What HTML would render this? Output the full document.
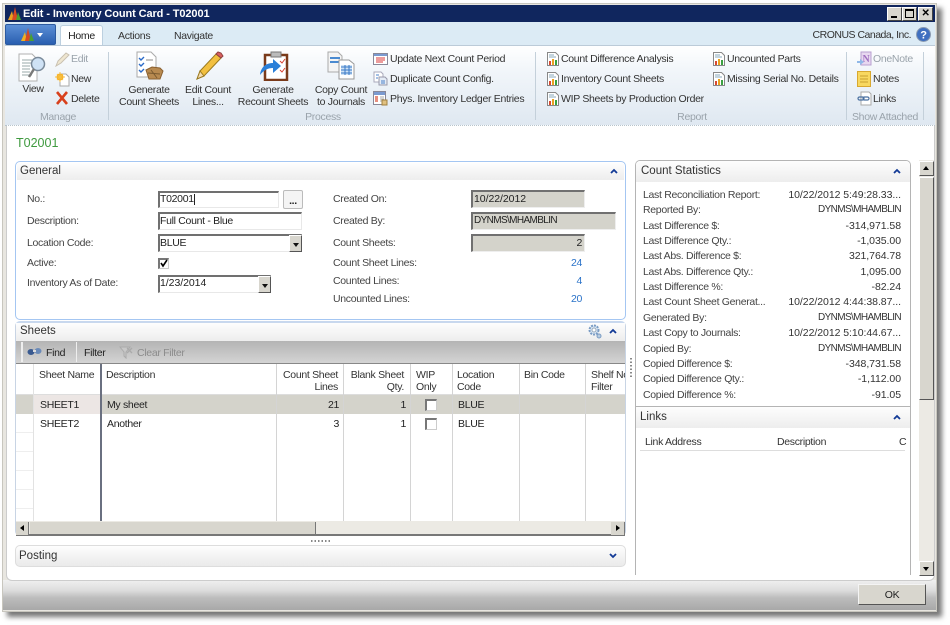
<!DOCTYPE html>
<html><head><meta charset="utf-8"><style>
*{box-sizing:border-box}
html,body{margin:0;padding:0;width:950px;height:625px;overflow:hidden;background:#fff;font-family:"Liberation Sans",sans-serif;font-size:10.5px;letter-spacing:-.31px;color:#333}
#w{position:absolute;left:0;top:0;width:950px;height:625px;filter:blur(.3px);overflow:hidden;background:#fff}
.a{position:absolute}
.t{position:absolute;white-space:nowrap;line-height:14px}
.h{font-size:11.5px;letter-spacing:0}
.n{letter-spacing:-.05px}
.u{font-size:10px;letter-spacing:-.62px}
.r{text-align:right}
.c{text-align:center}
.g{color:#9aa3ab}
.l{color:#444}
.b{color:#2a72c8}
.f{position:absolute;background:#fff;border:1px solid #e8e8e8;border-top:2px solid #707070;border-left:2px solid #707070}
.ro{background:#d4d3cb;border-color:#eee;border-top:2px solid #707070;border-left:2px solid #707070}
.dd{position:absolute;background:#d8d6ce;border:1px solid;border-color:#fff #555 #555 #fff}
.dd:after{content:"";position:absolute;left:3px;top:7px;border:3px solid transparent;border-top:4px solid #111;border-bottom:0}
.p{position:absolute;background:#fff;border-radius:5px}
.hd{position:absolute;background:linear-gradient(#fdfdfd,#ededed)}
.cv{position:absolute}
.ln{position:absolute;background:#d4d4d4}
.cb{position:absolute;width:11px;height:11px;background:#fff;border:1px solid #ccc;border-top:2px solid #777;border-left:2px solid #777}
</style></head><body><div id="w">
<!-- window frame with shadow -->
<div class="a" style="left:2px;top:3px;width:935px;height:609px;background:#e8e6e0;border:1px solid #c8c6be;box-shadow:5px 5px 5px #777"></div>
<!-- title bar -->
<div class="a" style="left:5px;top:5px;width:930px;height:17px;background:#10265e"></div>
<svg class="a" style="left:7px;top:6px" width="16" height="15" viewBox="0 0 16 15"><path d="M1 14L5 5l2 9z" fill="#e8a020"/><path d="M5 14L8 1l3 13z" fill="#d84a20"/><path d="M9 14l2-8 3 8z" fill="#4aa030"/></svg>
<div class="t" style="left:23px;top:7px;color:#fff;font-weight:bold;font-size:11px;letter-spacing:-.1px">Edit - Inventory Count Card - T02001</div>
<div class="a" style="left:887px;top:7px;width:15px;height:14px;background:#d8d6ce;border:1px solid;border-color:#fff #444 #444 #fff"><div class="a" style="left:3px;top:8px;width:6px;height:2px;background:#000"></div></div>
<div class="a" style="left:902px;top:7px;width:15px;height:14px;background:#d8d6ce;border:1px solid;border-color:#fff #444 #444 #fff"><div class="a" style="left:2px;top:1px;width:9px;height:9px;border:1px solid #000;border-top-width:2px"></div></div>
<div class="t" style="left:918px;top:7px;width:15px;height:14px;background:#d8d6ce;border:1px solid;border-color:#fff #444 #444 #fff;font-weight:bold;font-size:10px;line-height:11px;text-align:center;color:#000">✕</div>
<!-- tab row -->
<div class="a" style="left:5px;top:22px;width:930px;height:24px;background:#dcebf5"></div>
<div class="a" style="left:5px;top:24px;width:51px;height:21px;background:linear-gradient(#5b8fd6,#2a5fb0);border:1px solid #2c5aa0;border-radius:2px"></div>
<svg class="a" style="left:20px;top:27px" width="16" height="15" viewBox="0 0 16 15"><path d="M1 14L5 5l2 9z" fill="#f0b020"/><path d="M5 14L8 1l3 13z" fill="#d84a20"/><path d="M9 14l2-8 3 8z" fill="#4aa030"/></svg>
<div class="a" style="left:37px;top:33px;border:3.5px solid transparent;border-top:4px solid #fff;border-bottom:0"></div>
<div class="a" style="left:60px;top:25px;width:43px;height:21px;background:#fff;border:1px solid #bcd0e0;border-bottom:0;border-radius:3px 3px 0 0"></div>
<div class="t c" style="left:60px;top:29px;width:43px;color:#222">Home</div>
<div class="t" style="left:118px;top:29px;color:#333">Actions</div>
<div class="t" style="left:174px;top:29px;color:#333">Navigate</div>
<div class="t r" style="left:760px;top:28px;width:151px;color:#333;letter-spacing:-.5px">CRONUS Canada, Inc.</div>
<svg class="a" style="left:916px;top:27px" width="15" height="15" viewBox="0 0 15 15"><circle cx="7.5" cy="7.5" r="7" fill="#3f6fc0" stroke="#8a9ab0"/><text x="7.5" y="11.5" text-anchor="middle" font-size="11" font-weight="bold" fill="#fff" font-family="Liberation Sans">?</text></svg>
<!-- ribbon -->
<div class="a" style="left:5px;top:45px;width:930px;height:81px;background:linear-gradient(#fff 0%,#f2f6fa 30%,#dfe8f1 100%);border-top:1px solid #bccbd8;border-bottom:1px dotted #b8c4cc"></div>
<div class="ln" style="left:108px;top:52px;width:1px;height:68px;background:#c4d0da"></div>
<div class="ln" style="left:535px;top:52px;width:1px;height:68px;background:#c4d0da"></div>
<div class="ln" style="left:846px;top:52px;width:1px;height:68px;background:#c4d0da"></div>
<div class="ln" style="left:923px;top:52px;width:1px;height:68px;background:#c4d0da"></div>

<!-- View icon -->
<svg class="a" style="left:18px;top:52px" width="30" height="30" viewBox="0 0 30 30"><path d="M1 2h13l5 5v22H1z" fill="#fff" stroke="#b0b0b0"/><path d="M4 8h10M4 11h10M4 14h8M4 17h8M4 20h8M4 23h10" stroke="#9aa" stroke-width="1"/><circle cx="20" cy="12" r="6.5" fill="#cfe2f5" stroke="#7a8a9a" stroke-width="1.5"/><path d="M16 17l-5 8" stroke="#7a7a7a" stroke-width="2.5"/></svg>
<div class="t c" style="left:13px;top:82px;width:40px">View</div>
<!-- Edit/New/Delete -->
<svg class="a" style="left:55px;top:52px" width="15" height="15" viewBox="0 0 15 15"><path d="M1 14l2-5 8-8 3 2-8 8z" fill="#efe6d0" stroke="#c8c0b0"/></svg>
<div class="t g" style="left:71px;top:52px">Edit</div>
<svg class="a" style="left:55px;top:71px" width="15" height="16" viewBox="0 0 15 16"><path d="M5 3h6l3 3v9H5z" fill="#fff" stroke="#aaa"/><circle cx="5" cy="6" r="3.5" fill="#f6a820"/><path d="M5 1v10M0 6h10M2 3l6 6M8 3l-6 6" stroke="#f6c040"/></svg>
<div class="t" style="left:71px;top:72px">New</div>
<svg class="a" style="left:55px;top:91px" width="14" height="14" viewBox="0 0 14 14"><path d="M2 1l10 12M12 1L2 13" stroke="#d8401c" stroke-width="2.6"/></svg>
<div class="t" style="left:71px;top:92px">Delete</div>
<div class="t c g" style="left:38px;top:110px;width:40px">Manage</div>

<!-- Generate Count Sheets -->
<svg class="a" style="left:134px;top:51px" width="32" height="30" viewBox="0 0 32 30"><path d="M3 1h14l5 5v20H3z" fill="#fff" stroke="#aaa"/><path d="M5 7l2 2 3-3M5 13l2 2 3-3M5 19l2 2 3-3" stroke="#2a6ac8" stroke-width="1.4" fill="none"/><path d="M12 9h7" stroke="#888"/><path d="M12 19l6-3 8 1 3 3-3 8H15z" fill="#b88a50" stroke="#8a6030"/><path d="M14 22l12 1M17 19l6 8" stroke="#7a5a30"/></svg>
<div class="t c" style="left:112px;top:83px;width:74px">Generate</div>
<div class="t c" style="left:112px;top:95px;width:74px">Count Sheets</div>
<!-- Edit Count Lines -->
<svg class="a" style="left:195px;top:51px" width="30" height="30" viewBox="0 0 30 30"><path d="M2 28l3-8L21 3l5 4L9 25z" fill="#f2c040" stroke="#9a7a20"/><path d="M2 28l3-8 4 5z" fill="#f5dcb0" stroke="#9a7a20"/><path d="M21 3l5 4 2-2-2-3-3-1z" fill="#d86060" stroke="#904040"/></svg>
<div class="t c" style="left:178px;top:83px;width:60px">Edit Count</div>
<div class="t c" style="left:178px;top:95px;width:60px">Lines...</div>
<!-- Generate Recount Sheets -->
<svg class="a" style="left:259px;top:51px" width="30" height="30" viewBox="0 0 30 30"><rect x="6" y="4" width="22" height="25" fill="#fff" stroke="#7a3a1a" stroke-width="2.5"/><rect x="12" y="1" width="10" height="5" fill="#bbb" stroke="#777"/><path d="M1 24c1-9 7-12 13-12V8l8 7-8 7v-5c-5 0-9 2-13 7z" fill="#2a7fd8"/><path d="M21 19l2 2 3-4M21 10l2 2 3-4" stroke="#d84030" fill="none"/></svg>
<div class="t c" style="left:236px;top:83px;width:74px">Generate</div>
<div class="t c" style="left:236px;top:95px;width:74px">Recount Sheets</div>
<!-- Copy Count to Journals -->
<svg class="a" style="left:326px;top:51px" width="30" height="30" viewBox="0 0 30 30"><path d="M2 1h10l4 4v16H2z" fill="#f4f4f4" stroke="#aaa"/><path d="M4 7h10M4 11h10" stroke="#4a8ad0" stroke-width="2"/><path d="M13 9h10l5 4v15H13z" fill="#fff" stroke="#999"/><path d="M15 14h11v10H15z" fill="#cfe2f5"/><path d="M15 16h11M15 19h11M15 22h11M19 14v10M23 14v10" stroke="#3a7ac8"/></svg>
<div class="t c" style="left:311px;top:83px;width:60px">Copy Count</div>
<div class="t c" style="left:311px;top:95px;width:60px">to Journals</div>
<div class="t c g" style="left:300px;top:110px;width:46px">Process</div>

<!-- small process list -->
<svg class="a" style="left:373px;top:52px" width="15" height="14" viewBox="0 0 15 14"><rect x=".5" y="1.5" width="14" height="11" fill="#fff" stroke="#889"/><rect x="1" y="2" width="13" height="2" fill="#7a9ad0"/><path d="M3 6h9M3 8h9M3 10h7" stroke="#e06060" stroke-width="1.2"/></svg>
<div class="t" style="left:390px;top:52px">Update Next Count Period</div>
<svg class="a" style="left:373px;top:71px" width="15" height="15" viewBox="0 0 15 15"><path d="M1 1h7l2 2v8H1z" fill="#fff" stroke="#aab"/><path d="M6 6h6l2 2v6H6z" fill="#e4ecf6" stroke="#99a"/><path d="M3 4h3M3 7h2M8 10h4M8 12h4" stroke="#4a80c8"/></svg>
<div class="t" style="left:390px;top:72px">Duplicate Count Config.</div>
<svg class="a" style="left:373px;top:91px" width="15" height="15" viewBox="0 0 15 15"><rect x=".5" y=".5" width="12" height="13" fill="#fff" stroke="#889"/><rect x="1" y="1" width="11" height="3" fill="#7a9ad0"/><path d="M2 6h3M2 8h3M2 10h3" stroke="#d84a30" stroke-width="1.3"/><path d="M7 6h4M7 8h4M7 10h4" stroke="#aaa"/><rect x="9" y="9" width="5" height="5" fill="#e0c080" stroke="#a08040"/></svg>
<div class="t" style="left:390px;top:92px">Phys. Inventory Ledger Entries</div>

<!-- Report icons and text -->
<svg width="0" height="0" class="a"><defs><g id="rp"><path d="M.5.5h8l3 3v10H.5z" fill="#fff" stroke="#888"/><path d="M2 3h5M2 5h7" stroke="#8ab"/><rect x="2" y="9" width="2" height="4" fill="#d84a30"/><rect x="5" y="7" width="2" height="6" fill="#e8a020"/><rect x="8" y="8" width="2" height="5" fill="#3aa040"/></g></defs></svg>
<svg class="a" style="left:547px;top:52px" width="12" height="14"><use href="#rp"/></svg>
<div class="t" style="left:561px;top:52px">Count Difference Analysis</div>
<svg class="a" style="left:547px;top:72px" width="12" height="14"><use href="#rp"/></svg>
<div class="t" style="left:561px;top:72px">Inventory Count Sheets</div>
<svg class="a" style="left:547px;top:92px" width="12" height="14"><use href="#rp"/></svg>
<div class="t" style="left:561px;top:92px">WIP Sheets by Production Order</div>
<svg class="a" style="left:713px;top:52px" width="12" height="14"><use href="#rp"/></svg>
<div class="t" style="left:727px;top:52px">Uncounted Parts</div>
<svg class="a" style="left:713px;top:72px" width="12" height="14"><use href="#rp"/></svg>
<div class="t" style="left:727px;top:72px">Missing Serial No. Details</div>
<div class="t c g" style="left:670px;top:110px;width:44px">Report</div>

<!-- Show attached -->
<svg class="a" style="left:857px;top:51px" width="15" height="16" viewBox="0 0 15 16"><rect x="4" y="1" width="10" height="13" fill="#e8d8f0" stroke="#b8a0d0"/><text x="9" y="11" text-anchor="middle" font-size="10" font-weight="bold" fill="#a070c0" font-family="Liberation Serif">N</text><path d="M0 10h3V8l4 3-4 3v-2H0z" fill="#90b8e8"/></svg>
<div class="t g" style="left:873px;top:52px">OneNote</div>
<svg class="a" style="left:857px;top:71px" width="14" height="16" viewBox="0 0 14 16"><rect x=".5" y=".5" width="13" height="15" fill="#f8d860" stroke="#d8a830"/><path d="M3 5h8M3 8h8M3 11h8" stroke="#c8a030"/></svg>
<div class="t" style="left:873px;top:72px">Notes</div>
<svg class="a" style="left:857px;top:91px" width="15" height="15" viewBox="0 0 15 15"><path d="M4 1h8l2 2v11H4z" fill="#fff" stroke="#aaa"/><rect x="1" y="6" width="6" height="3" rx="1.5" fill="none" stroke="#4a70a0" stroke-width="1.2"/><rect x="6" y="6" width="6" height="3" rx="1.5" fill="none" stroke="#4a70a0" stroke-width="1.2"/></svg>
<div class="t" style="left:873px;top:92px">Links</div>
<div class="t c g" style="left:846px;top:110px;width:78px">Show Attached</div>

<!-- bottom bar and content -->
<div class="a" style="left:3px;top:126px;width:933px;height:456px;background:#e8e6e0"></div>
<div class="a" style="left:3px;top:580px;width:933px;height:30px;background:linear-gradient(#f0f0f0 0%,#dcdcdc 35%,#bcbcbc 60%,#a8a8a8 100%)"></div>
<div class="a" style="left:6px;top:126px;width:929px;height:455px;background:#fff;border-bottom:1px solid #ccc;border-left:1px solid #ccc;border-right:1px solid #ccc;border-radius:0 0 6px 6px"></div>
<div class="t" style="left:16px;top:136px;font-size:12.5px;letter-spacing:0;color:#3f9a3f">T02001</div>

<!-- General panel -->
<div class="p" style="left:15px;top:161px;width:611px;height:159px;border:1.5px solid #a4c6f2"></div>
<div class="hd" style="left:17px;top:163px;width:607px;height:17px"></div>
<div class="t h" style="left:20px;top:164px">General</div>
<svg class="cv" style="left:610px;top:168px" width="8" height="6"><path d="M1 5l3-3 3 3" fill="none" stroke="#123a96" stroke-width="1.8"/></svg>

<div class="t l" style="left:27px;top:192px">No.:</div>
<div class="f" style="left:158px;top:191px;width:121px;height:17px"></div>
<div class="t" style="left:160px;top:192px;color:#222">T02001</div>
<div class="a" style="left:194px;top:194px;width:1px;height:11px;background:#222"></div>
<div class="a" style="left:283px;top:190px;width:20px;height:19px;background:#f4f4f4;border:1px solid #bbb;border-radius:2px"></div>
<div class="t c" style="left:283px;top:194px;width:20px;font-weight:bold;color:#222">...</div>

<div class="t l" style="left:27px;top:214px">Description:</div>
<div class="f" style="left:158px;top:212px;width:144px;height:18px"></div>
<div class="t" style="left:160px;top:214px;color:#222">Full Count - Blue</div>

<div class="t l" style="left:27px;top:236px">Location Code:</div>
<div class="f" style="left:158px;top:234px;width:144px;height:18px"></div>
<div class="t" style="left:160px;top:236px;color:#222">BLUE</div>
<div class="dd" style="left:289px;top:235px;width:13px;height:17px"></div>

<div class="t l" style="left:27px;top:256px">Active:</div>
<div class="cb" style="left:158px;top:258px"></div>
<svg class="a" style="left:158px;top:258px" width="11" height="11"><path d="M3 5l2 3 4-6" fill="none" stroke="#000" stroke-width="1.6"/></svg>

<div class="t l" style="left:27px;top:276px">Inventory As of Date:</div>
<div class="f" style="left:158px;top:275px;width:113px;height:18px"></div>
<div class="t n" style="left:160px;top:276px;color:#222">1/23/2014</div>
<div class="dd" style="left:258px;top:276px;width:13px;height:17px"></div>

<div class="t l" style="left:333px;top:192px">Created On:</div>
<div class="f ro" style="left:471px;top:190px;width:114px;height:18px"></div>
<div class="t n" style="left:474px;top:192px;color:#222">10/22/2012</div>
<div class="t l" style="left:333px;top:214px">Created By:</div>
<div class="f ro" style="left:471px;top:212px;width:145px;height:18px"></div>
<div class="t u" style="left:474px;top:214px;color:#222">DYNMS\MHAMBLIN</div>
<div class="t l" style="left:333px;top:236px">Count Sheets:</div>
<div class="f ro" style="left:471px;top:234px;width:114px;height:18px"></div>
<div class="t r" style="left:540px;top:236px;width:42px;color:#222">2</div>
<div class="t l" style="left:333px;top:256px">Count Sheet Lines:</div>
<div class="t r b" style="left:540px;top:256px;width:42px">24</div>
<div class="t l" style="left:333px;top:274px">Counted Lines:</div>
<div class="t r b" style="left:540px;top:274px;width:42px">4</div>
<div class="t l" style="left:333px;top:292px">Uncounted Lines:</div>
<div class="t r b" style="left:540px;top:292px;width:42px">20</div>

<!-- Sheets panel -->
<div class="p" style="left:15px;top:321px;width:611px;height:215px;border:1px solid #c8d4e4;border-top:2px solid #c8d8ee"></div>
<div class="hd" style="left:16px;top:323px;width:609px;height:18px"></div>
<div class="t h" style="left:20px;top:324px">Sheets</div>
<svg class="a" style="left:587px;top:323px" width="15" height="16" viewBox="0 0 15 16"><circle cx="7" cy="7" r="4.5" fill="#d8e6f4" stroke="#7a9cc4" stroke-width="2" stroke-dasharray="2 1"/><circle cx="7" cy="7" r="2" fill="#fff" stroke="#9ab"/><circle cx="12" cy="13" r="2" fill="#b8cce0" stroke="#7a9cc4"/></svg>
<svg class="cv" style="left:609px;top:328px" width="8" height="6"><path d="M1 5l3-3 3 3" fill="none" stroke="#123a96" stroke-width="1.8"/></svg>
<!-- toolbar -->
<div class="a" style="left:16px;top:341px;width:609px;height:23px;background:linear-gradient(#b4b4b4,#d4d4d4);border-bottom:1px solid #888"></div>
<div class="a" style="left:21px;top:342px;width:2px;height:20px;background:#eee"></div>
<div class="a" style="left:76px;top:342px;width:1px;height:20px;background:#eee"></div>
<svg class="a" style="left:27px;top:347px" width="16" height="10" viewBox="0 0 16 10"><ellipse cx="4" cy="5" rx="3.5" ry="3" fill="#3a5a90"/><ellipse cx="11" cy="4" rx="3.5" ry="3" fill="#6a8ab8"/><path d="M6 4h3" stroke="#ddd" stroke-width="2"/></svg>
<div class="t" style="left:46px;top:346px;color:#222">Find</div>
<div class="t" style="left:84px;top:346px;color:#222">Filter</div>
<svg class="a" style="left:119px;top:346px" width="14" height="13" viewBox="0 0 14 13"><path d="M1 1h10L7 6v6L5 10V6z" fill="#c8c8c8" stroke="#aaa"/><path d="M8 2l5 5M13 2L8 7" stroke="#aaa" stroke-width="1.3"/></svg>
<div class="t" style="left:137px;top:346px;color:#8c8c8c">Clear Filter</div>
<!-- grid -->
<div class="a" style="left:16px;top:364px;width:609px;height:157px;background:#fff"></div>
<div class="a" style="left:16px;top:394px;width:609px;height:1px;background:#ddd"></div>
<div class="a" style="left:16px;top:395px;width:609px;height:19px;background:#d4d3cb"></div>
<div class="a" style="left:34px;top:395px;width:66px;height:19px;background:#ece6e4"></div>
<div class="ln" style="left:33px;top:364px;width:1px;height:157px;background:#e2e2e2"></div>
<div class="ln" style="left:16px;top:432px;width:17px;height:1px;background:#eee"></div>
<div class="ln" style="left:16px;top:451px;width:17px;height:1px;background:#eee"></div>
<div class="ln" style="left:16px;top:470px;width:17px;height:1px;background:#eee"></div>
<div class="ln" style="left:16px;top:489px;width:17px;height:1px;background:#eee"></div>
<div class="ln" style="left:16px;top:508px;width:17px;height:1px;background:#eee"></div>
<div class="ln" style="left:100px;top:364px;width:1.5px;height:157px;background:#6a7080"></div>
<div class="ln" style="left:276px;top:364px;width:1px;height:157px"></div>
<div class="ln" style="left:343px;top:364px;width:1px;height:157px"></div>
<div class="ln" style="left:410px;top:364px;width:1px;height:157px"></div>
<div class="ln" style="left:452px;top:364px;width:1px;height:157px"></div>
<div class="ln" style="left:519px;top:364px;width:1px;height:157px"></div>
<div class="ln" style="left:585px;top:364px;width:1px;height:157px"></div>
<div class="t" style="left:39px;top:368px">Sheet Name</div>
<div class="t" style="left:106px;top:368px">Description</div>
<div class="t r" style="left:277px;top:368px;width:61px">Count Sheet</div>
<div class="t r" style="left:277px;top:380px;width:61px">Lines</div>
<div class="t r" style="left:344px;top:368px;width:60px">Blank Sheet</div>
<div class="t r" style="left:344px;top:380px;width:60px">Qty.</div>
<div class="t" style="left:416px;top:368px">WIP</div>
<div class="t" style="left:416px;top:380px">Only</div>
<div class="t" style="left:457px;top:368px">Location</div>
<div class="t" style="left:457px;top:380px">Code</div>
<div class="t" style="left:524px;top:368px">Bin Code</div>
<div class="a" style="left:586px;top:364px;width:39px;height:30px;overflow:hidden"><div class="t" style="left:5px;top:4px">Shelf No.</div><div class="t" style="left:5px;top:16px">Filter</div></div>

<div class="t" style="left:40px;top:398px;color:#222">SHEET1</div>
<div class="t" style="left:107px;top:398px;color:#222">My sheet</div>
<div class="t r" style="left:277px;top:398px;width:62px;color:#222">21</div>
<div class="t r" style="left:344px;top:398px;width:62px;color:#222">1</div>
<div class="cb" style="left:425px;top:399px;width:12px;height:12px"></div>
<div class="t" style="left:458px;top:398px;color:#222">BLUE</div>
<div class="t" style="left:40px;top:417px;color:#222">SHEET2</div>
<div class="t" style="left:107px;top:417px;color:#222">Another</div>
<div class="t r" style="left:277px;top:417px;width:62px;color:#222">3</div>
<div class="t r" style="left:344px;top:417px;width:62px;color:#222">1</div>
<div class="cb" style="left:425px;top:418px;width:12px;height:12px"></div>
<div class="t" style="left:458px;top:417px;color:#222">BLUE</div>
<!-- h scroll -->
<div class="a" style="left:16px;top:521px;width:609px;height:15px;background:#eceae4;border-bottom:2px solid #777"></div>
<div class="a" style="left:30px;top:522px;width:286px;height:12px;background:#d8d6ce;border-right:1px solid #777"></div>
<div class="a" style="left:16px;top:522px;width:13px;height:13px;background:#d8d6ce;border-right:1px solid #777"></div>
<div class="a" style="left:20px;top:525px;border:3px solid transparent;border-right:4px solid #000;border-left:0"></div>
<div class="a" style="left:611px;top:522px;width:14px;height:13px;background:#d8d6ce;border-right:1px solid #777"></div>
<div class="a" style="left:616px;top:525px;border:3px solid transparent;border-left:4px solid #000;border-right:0"></div>
<div class="a" style="left:311px;top:540px;width:21px;height:2px;background:repeating-linear-gradient(90deg,#888 0 1.5px,transparent 1.5px 3.5px)"></div>
<div class="a" style="left:630px;top:358px;width:2px;height:20px;background:repeating-linear-gradient(#888 0 1.5px,transparent 1.5px 3.5px)"></div>

<!-- Posting -->
<div class="p" style="left:15px;top:545px;width:611px;height:22px;border:1px solid #ddd;background:linear-gradient(#fdfdfd,#eaeaea)"></div>
<div class="t h" style="left:19px;top:549px">Posting</div>
<svg class="cv" style="left:609px;top:553px" width="8" height="6"><path d="M1 1l3 3 3-3" fill="none" stroke="#123a96" stroke-width="1.8"/></svg>

<!-- right panel -->
<div class="a" style="left:635px;top:160px;width:276px;height:415px;border:1px solid #b4b4b4;border-bottom:0;border-radius:5px 5px 0 0;background:#fff"></div>
<div class="hd" style="left:636px;top:161px;width:274px;height:21px;border-radius:4px 4px 0 0"></div>
<div class="t h" style="left:641px;top:164px">Count Statistics</div>
<svg class="cv" style="left:893px;top:168px" width="8" height="6"><path d="M1 5l3-3 3 3" fill="none" stroke="#123a96" stroke-width="1.8"/></svg>

<div class="t l" style="left:643px;top:188px">Last Reconciliation Report:</div><div class="t r n" style="left:760px;top:188px;width:141px">10/22/2012 5:49:28.33...</div>
<div class="t l" style="left:643px;top:203px">Reported By:</div><div class="t r u" style="left:760px;top:203px;width:141px">DYNMS\MHAMBLIN</div>
<div class="t l" style="left:643px;top:219px">Last Difference $:</div><div class="t r n" style="left:760px;top:219px;width:141px">-314,971.58</div>
<div class="t l" style="left:643px;top:234px">Last Difference Qty.:</div><div class="t r n" style="left:760px;top:234px;width:141px">-1,035.00</div>
<div class="t l" style="left:643px;top:249px">Last Abs. Difference $:</div><div class="t r n" style="left:760px;top:249px;width:141px">321,764.78</div>
<div class="t l" style="left:643px;top:265px">Last Abs. Difference Qty.:</div><div class="t r n" style="left:760px;top:265px;width:141px">1,095.00</div>
<div class="t l" style="left:643px;top:280px">Last Difference %:</div><div class="t r n" style="left:760px;top:280px;width:141px">-82.24</div>
<div class="t l" style="left:643px;top:295px">Last Count Sheet Generat...</div><div class="t r n" style="left:760px;top:295px;width:141px">10/22/2012 4:44:38.87...</div>
<div class="t l" style="left:643px;top:311px">Generated By:</div><div class="t r u" style="left:760px;top:311px;width:141px">DYNMS\MHAMBLIN</div>
<div class="t l" style="left:643px;top:326px">Last Copy to Journals:</div><div class="t r n" style="left:760px;top:326px;width:141px">10/22/2012 5:10:44.67...</div>
<div class="t l" style="left:643px;top:342px">Copied By:</div><div class="t r u" style="left:760px;top:342px;width:141px">DYNMS\MHAMBLIN</div>
<div class="t l" style="left:643px;top:357px">Copied Difference $:</div><div class="t r n" style="left:760px;top:357px;width:141px">-348,731.58</div>
<div class="t l" style="left:643px;top:372px">Copied Difference Qty.:</div><div class="t r n" style="left:760px;top:372px;width:141px">-1,112.00</div>
<div class="t l" style="left:643px;top:388px">Copied Difference %:</div><div class="t r n" style="left:760px;top:388px;width:141px">-91.05</div>

<div class="a" style="left:636px;top:406px;width:274px;height:1px;background:#b4b4b4"></div>
<div class="hd" style="left:636px;top:407px;width:274px;height:21px"></div>
<div class="t h" style="left:640px;top:410px">Links</div>
<svg class="cv" style="left:893px;top:414px" width="8" height="6"><path d="M1 5l3-3 3 3" fill="none" stroke="#123a96" stroke-width="1.8"/></svg>
<div class="t" style="left:645px;top:435px">Link Address</div>
<div class="t" style="left:777px;top:435px">Description</div>
<div class="t" style="left:899px;top:435px">C</div>
<div class="a" style="left:640px;top:450px;width:265px;height:1px;background:#ddd"></div>

<!-- v scroll -->
<div class="a" style="left:919px;top:160px;width:15px;height:416px;background:#eceae4"></div>
<div class="a" style="left:919px;top:161px;width:15px;height:15px;background:#d8d6ce;border:1px solid;border-color:#fff #555 #555 #fff"></div>
<div class="a" style="left:923px;top:166px;border:3px solid transparent;border-bottom:4px solid #000;border-top:0"></div>
<div class="a" style="left:919px;top:177px;width:15px;height:223px;background:#d8d6ce;border:1px solid;border-color:#fff #555 #555 #fff"></div>
<div class="a" style="left:919px;top:561px;width:15px;height:15px;background:#d8d6ce;border:1px solid;border-color:#fff #555 #555 #fff"></div>
<div class="a" style="left:923px;top:567px;border:3px solid transparent;border-top:4px solid #000;border-bottom:0"></div>

<!-- OK -->
<div class="a" style="left:858px;top:584px;width:68px;height:21px;background:#d8d6ce;border:1px solid;border-color:#f4f4f4 #555 #555 #f4f4f4"></div>
<div class="t c" style="left:858px;top:588px;width:68px;color:#222">OK</div>
</div></body></html>
